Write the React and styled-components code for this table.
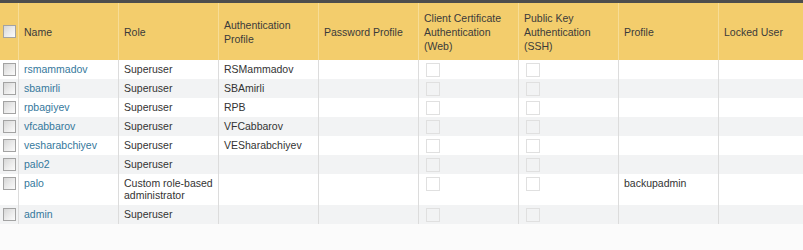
import React from "react";
import styled, { createGlobalStyle } from "styled-components";

const Global = createGlobalStyle`
  html, body { margin: 0; padding: 0; background: #fbfbfb; }
  body { font-family: "Liberation Sans", Arial, sans-serif; font-size: 10.5px; color: #333; }
`;

const COLS = "19px repeat(7, 100px) 1fr";

const Page = styled.div`
  width: 803px;
  height: 250px;
  display: flex;
  flex-direction: column;
  background: #fbfbfb;
`;

const TopBar = styled.div`
  height: 3px;
  background: #4d4d4d;
  flex: none;
`;

const Table = styled.div`
  display: flex;
  flex-direction: column;
`;

const HeaderRow = styled.div`
  display: grid;
  grid-template-columns: ${COLS};
  height: 57px;
  background: #f3cd6c;
`;

const HeadCell = styled.div`
  display: flex;
  align-items: center;
  padding: 0 5px;
  line-height: 14px;
  color: #3a3a3a;
  border-right: 1px solid ${(p) => (p.$last ? "transparent" : "#f7dc95")};
  box-sizing: border-box;
  justify-content: ${(p) => (p.$center ? "center" : "flex-start")};
  ${(p) => p.$check && "padding: 0 0 0 3px;"}
`;

const Row = styled.div`
  display: grid;
  grid-template-columns: ${COLS};
  background: ${(p) => (p.$alt ? "#f2f3f4" : "#ffffff")};
`;

const Cell = styled.div`
  padding: 3px 5px 4px 5px;
  line-height: 12px;
  border-right: 1px solid ${(p) => (p.$last ? "transparent" : "#dcdcdc")};
  box-sizing: border-box;
  min-height: 19px;
  ${(p) => p.$check && "padding: 3px 0 0 3px;"}
  ${(p) => p.$box && "padding: 3px 0 0 7px;"}
`;

const Link = styled.a`
  color: #35789c;
  text-decoration: none;
  cursor: pointer;
`;

const Check = styled.span`
  display: block;
  width: 13px;
  height: 13px;
  box-sizing: border-box;
  border: 1px solid #a3a3a3;
  background: linear-gradient(135deg, #d6d6d6 0%, #ececec 55%, #fbfbfb 100%);
`;

const DisabledBox = styled.span`
  display: block;
  width: 14px;
  height: 14px;
  box-sizing: border-box;
  border: 1px solid #e0e0e0;
  background: transparent;
`;

const headers = [
  "Name",
  "Role",
  ["Authentication", "Profile"],
  "Password Profile",
  ["Client Certificate", "Authentication", "(Web)"],
  ["Public Key", "Authentication", "(SSH)"],
  "Profile",
  "Locked User",
];

const rows = [
  { name: "rsmammadov", role: "Superuser", auth: "RSMammadov" },
  { name: "sbamirli", role: "Superuser", auth: "SBAmirli" },
  { name: "rpbagiyev", role: "Superuser", auth: "RPB" },
  { name: "vfcabbarov", role: "Superuser", auth: "VFCabbarov" },
  { name: "vesharabchiyev", role: "Superuser", auth: "VESharabchiyev" },
  { name: "palo2", role: "Superuser", auth: "" },
  { name: "palo", role: ["Custom role-based", "administrator"], auth: "", profile: "backupadmin" },
  { name: "admin", role: "Superuser", auth: "" },
];

const Lines = ({ value }) =>
  Array.isArray(value)
    ? value.map((l, i) => (
        <React.Fragment key={i}>
          {i > 0 && <br />}
          {l}
        </React.Fragment>
      ))
    : value;

export default function App() {
  return (
    <Page>
      <Global />
      <TopBar />
      <Table>
        <HeaderRow>
          <HeadCell $check>
            <Check />
          </HeadCell>
          {headers.map((h, i) => (
            <HeadCell key={i} $last={i === headers.length - 1}>
              <div>
                <Lines value={h} />
              </div>
            </HeadCell>
          ))}
        </HeaderRow>
        {rows.map((r, i) => (
          <Row key={r.name} $alt={i % 2 === 1}>
            <Cell $check>
              <Check />
            </Cell>
            <Cell>
              <Link>{r.name}</Link>
            </Cell>
            <Cell>
              <Lines value={r.role} />
            </Cell>
            <Cell>{r.auth}</Cell>
            <Cell />
            <Cell $box>
              <DisabledBox />
            </Cell>
            <Cell $box>
              <DisabledBox />
            </Cell>
            <Cell>{r.profile || ""}</Cell>
            <Cell $last />
          </Row>
        ))}
      </Table>
    </Page>
  );
}
